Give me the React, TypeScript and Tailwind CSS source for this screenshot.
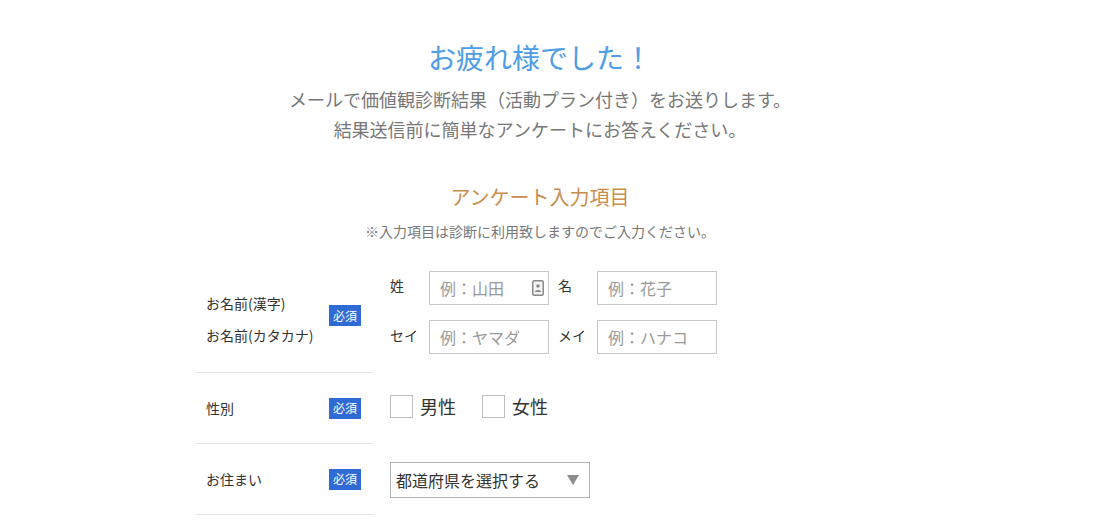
import React from 'react';

const jp = { fontFamily: '"Noto Sans CJK JP", "Noto Sans", sans-serif' };

function Badge() {
    return (
        <span className="inline-flex items-center justify-center w-[32px] h-[21px] bg-[#2f6bd5] text-white text-[12px] leading-none">
            必須
        </span>
    );
}

function ContactIcon() {
    return (
        <svg width="12" height="16" viewBox="0 0 12 16" className="absolute right-[5px] top-[9px]">
            <rect x="0.75" y="0.75" width="10.5" height="14.5" rx="1.5" fill="#f4f4f4" stroke="#8a8a8a" strokeWidth="1.5" />
            <circle cx="6" cy="6" r="1.8" fill="#8a8a8a" />
            <path d="M2.8 12 C3 9.3 9 9.3 9.2 12 Z" fill="#8a8a8a" />
        </svg>
    );
}

function TextInput({ placeholder, icon }: { placeholder: string; icon?: boolean }) {
    return (
        <div className="relative">
            <input
                className="w-[120px] h-[34px] border border-[#c8c8c8] bg-white pl-[10px] text-[16px] text-[#333] placeholder:text-[#9a9a9a] outline-none"
                placeholder={placeholder}
                style={jp}
            />
            {icon && <ContactIcon />}
        </div>
    );
}

function Checkbox({ label }: { label: string }) {
    return (
        <label className="flex items-center gap-[7px]">
            <span className="w-[23px] h-[23px] border border-[#bdbdbd] bg-white" />
            <span className="text-[18px] text-[#333]">{label}</span>
        </label>
    );
}

export default function App() {
    return (
        <div className="w-[1080px] bg-white min-h-[527px]" style={jp}>
            <div className="pt-[37px] text-center">
                <h1 className="text-[28px] leading-[40px] text-[#4f9de6] font-normal">お疲れ様でした！</h1>
                <p className="mt-[7px] text-[18px] leading-[30px] text-[#777]">
                    メールで価値観診断結果（活動プラン付き）をお送りします。
                    <br />
                    結果送信前に簡単なアンケートにお答えください。
                </p>
                <h2 className="mt-[38px] text-[20px] leading-[30px] text-[#c98d4e] font-normal">アンケート入力項目</h2>
                <p className="mt-[9px] text-[14px] leading-[20px] text-[#777]">※入力項目は診断に利用致しますのでご入力ください。</p>
            </div>

            <div className="w-[688px] mx-auto mt-[21px]">
                {/* name */}
                <div className="flex">
                    <div className="w-[178px] border-b border-[#e5e5e5] flex items-center justify-between pl-[10px] pr-[13px] pb-[3px]">
                        <div className="mt-[6px] flex flex-col gap-[12px] text-[14px] leading-[20px] text-[#333]">
                            <span>お名前(漢字)</span>
                            <span>お名前(カタカナ)</span>
                        </div>
                        <Badge />
                    </div>
                    <div className="pl-[16px] pt-[9px] pb-[19px] flex flex-col gap-[15px] text-[14px] text-[#333]">
                        <div className="flex items-center">
                            <span className="w-[39px] -mt-[4px] self-start pt-[8px]">姓</span>
                            <TextInput placeholder="例：山田" icon />
                            <span className="ml-[9px] w-[39px] self-start pt-[4px]">名</span>
                            <TextInput placeholder="例：花子" />
                        </div>
                        <div className="flex items-center">
                            <span className="w-[39px] self-start pt-[5px]">セイ</span>
                            <TextInput placeholder="例：ヤマダ" />
                            <span className="ml-[9px] w-[39px] self-start pt-[5px]">メイ</span>
                            <TextInput placeholder="例：ハナコ" />
                        </div>
                    </div>
                </div>

                {/* gender */}
                <div className="flex h-[71px]">
                    <div className="w-[178px] border-b border-[#e5e5e5] flex items-center justify-between pl-[10px] pr-[13px]">
                        <span className="text-[14px] text-[#333]">性別</span>
                        <Badge />
                    </div>
                    <div className="pl-[16px] flex items-center gap-[26px] pb-[5px]">
                        <Checkbox label="男性" />
                        <Checkbox label="女性" />
                    </div>
                </div>

                {/* address */}
                <div className="flex h-[71px]">
                    <div className="w-[178px] border-b border-[#e5e5e5] flex items-center justify-between pl-[10px] pr-[13px]">
                        <span className="text-[14px] text-[#333]">お住まい</span>
                        <Badge />
                    </div>
                    <div className="pl-[16px] flex items-center">
                        <div className="relative w-[200px] h-[36px] border border-[#b5b5b5] bg-white flex items-center pl-[5px]">
                            <span className="text-[16px] text-[#333]">都道府県を選択する</span>
                            <svg width="12" height="10" viewBox="0 0 12 10" className="absolute right-[10px] top-[12px]">
                                <path d="M0 0 H12 L6 10 Z" fill="#8c8c8c" />
                            </svg>
                        </div>
                    </div>
                </div>
            </div>
        </div>
    );
}
